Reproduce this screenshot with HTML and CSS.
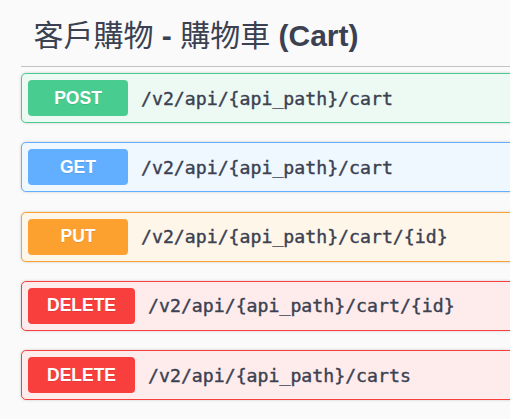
FILE: index.html
```html
<!DOCTYPE html>
<html lang="zh-Hant">
<head>
<meta charset="utf-8">
<title>Cart</title>
<link rel="stylesheet" href="styles.css">
</head>
<body>
<div class="page">
  <section class="tag-section">
    <h4 class="tag-title"><span class="cjk">客戶購物</span> - <span class="cjk">購物車</span> (Cart)</h4>
    <div class="opblock post">
      <span class="method">POST</span>
      <span class="path">/v2/api/{api_path}/cart</span>
    </div>
    <div class="opblock get">
      <span class="method">GET</span>
      <span class="path">/v2/api/{api_path}/cart</span>
    </div>
    <div class="opblock put">
      <span class="method">PUT</span>
      <span class="path">/v2/api/{api_path}/cart/{id}</span>
    </div>
    <div class="opblock delete">
      <span class="method">DELETE</span>
      <span class="path">/v2/api/{api_path}/cart/{id}</span>
    </div>
    <div class="opblock delete">
      <span class="method">DELETE</span>
      <span class="path">/v2/api/{api_path}/carts</span>
    </div>
  </section>
</div>
</body>
</html>
```

FILE: styles.css
```css
html, body {
  margin: 0;
  padding: 0;
  background: #fafafa;
}

.page {
  padding: 4px 0 0 21px;
  height: 419px;
  box-sizing: border-box;
  overflow: hidden;
}

.tag-section {
  display: flex;
  flex-direction: column;
  width: 580px;
}

.tag-title {
  margin: 0 0 6px 0;
  padding: 12.5px 25px 12.5px 12.5px;
  font-family: "Liberation Sans", "Noto Sans CJK TC", sans-serif;
  font-size: 30px;
  font-weight: 700;
  line-height: 37px;
  color: #3b4151;
  border-bottom: 1px solid rgba(59, 65, 81, 0.3);
}

.tag-title .cjk {
  font-weight: 400;
}

.opblock {
  display: flex;
  align-items: center;
  padding: 6px;
  margin: 0 0 19.3px 0;
  border: 1px solid;
  border-radius: 5px;
  box-shadow: 0 0 3px rgba(0, 0, 0, 0.19);
}

.method {
  box-sizing: border-box;
  min-width: 100px;
  height: 36px;
  padding: 0 19px;
  display: flex;
  align-items: center;
  justify-content: center;
  border-radius: 4px;
  font-family: "Liberation Sans", Arial, sans-serif;
  font-size: 17.5px;
  font-weight: 700;
  color: #fff;
  text-shadow: 0 1px 0 rgba(0, 0, 0, 0.1);
}

.path {
  padding: 0 12.5px 0 13px;
  font-family: "DejaVu Sans Mono", monospace;
  font-size: 18.2px;
  font-weight: 400;
  -webkit-text-stroke: 0.4px #3b4151;
  color: #3b4151;
}

.post { background: #edfaf4; border-color: #49cc90; }
.post .method { background: #49cc90; }

.get { background: #eff7ff; border-color: #61affe; }
.get .method { background: #61affe; }

.put { background: #fff6ea; border-color: #fca130; }
.put .method { background: #fca130; }

.delete { background: #feecec; border-color: #f93e3e; }
.delete .method { background: #f93e3e; }
```
